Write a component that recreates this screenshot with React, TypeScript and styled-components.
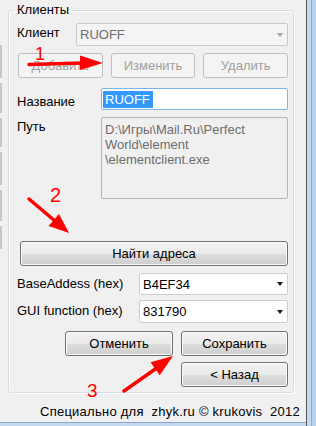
import React from 'react';
import styled, { createGlobalStyle } from 'styled-components';

const GlobalStyle = createGlobalStyle`
    html, body {
        margin: 0;
        padding: 0;
        background: #f0f0f0;
    }
    body {
        font-family: "Liberation Sans", Arial, sans-serif;
        font-size: 13px;
        color: #000;
    }
`

const Screen = styled.div`
    position: relative;
    width: 316px;
    height: 426px;
    overflow: hidden;
    display: flex;
    background: #f0f0f0;
`

const Main = styled.div`
    width: 306px;
    display: flex;
    flex-direction: column;
`

const Body = styled.div`
    flex: 1;
    display: flex;
`

const EdgeStrip = styled.div`
    width: 3px;
    display: flex;
    flex-direction: column;
    gap: 5px;
    padding-top: 45px;
`

const EdgeTick = styled.div<{ $h: number }>`
    width: 2px;
    height: ${p => p.$h}px;
    background: #c8c8c8;
`

const Panel = styled.div`
    width: 303px;
    display: flex;
    flex-direction: column;
`

const Group = styled.fieldset`
    box-sizing: border-box;
    width: 286px;
    min-width: 0;
    margin: 2px 0 0 5px;
    padding: 5px 5px 5px 8px;
    border: 1px solid #d5dfe5;
    border-radius: 3px;
    box-shadow: inset 1px 1px 0 #fff, 1px 1px 0 #fff;
    display: flex;
    flex-direction: column;
`

const Legend = styled.legend`
    padding: 0 3px;
    margin-left: -3px;
    line-height: 16px;
    font-size: 13px;
`

const Row = styled.div<{ $mt?: number; $h: number }>`
    display: flex;
    align-items: flex-start;
    margin-top: ${p => p.$mt || 0}px;
    height: ${p => p.$h}px;
`

const Label = styled.span<{ $w: number; $pt: number }>`
    width: ${p => p.$w}px;
    flex: none;
    padding-top: ${p => p.$pt}px;
    line-height: 15px;
    white-space: nowrap;
`

const Combo = styled.div<{ $disabled?: boolean }>`
    box-sizing: border-box;
    flex: 1;
    height: 100%;
    display: flex;
    align-items: center;
    justify-content: space-between;
    padding: 0 4px 0 3px;
    border: 1px solid ${p => p.$disabled ? '#c9c9c9' : '#cdcdcd'};
    border-radius: 2px;
    background: ${p => p.$disabled ? '#f4f4f4' : '#fff'};
    color: ${p => p.$disabled ? '#6d6d6d' : '#000'};
`

const Caret = styled.span<{ $disabled?: boolean }>`
    width: 0;
    height: 0;
    border-left: 3.5px solid transparent;
    border-right: 3.5px solid transparent;
    border-top: 4px solid ${p => p.$disabled ? '#a3a3a3' : '#1a1a1a'};
`

const TextInput = styled.div`
    box-sizing: border-box;
    flex: 1;
    height: 100%;
    display: flex;
    align-items: center;
    padding-left: 1px;
    border: 1px solid #7eb4ea;
    border-radius: 2px;
    background: #fff;
`

const Selected = styled.span`
    padding: 0 3px 0 2px;
    line-height: 17px;
    background: #3399ff;
    color: #fff;
`

const PathBox = styled.div`
    box-sizing: border-box;
    flex: 1;
    height: 100%;
    padding: 4px 3px 0;
    border: 1px solid #b5b5b5;
    border-radius: 2px;
    background: #f0f0f0;
    color: #6d6d6d;
    line-height: 15px;
    white-space: pre-line;
`

const ButtonGrid = styled.div`
    display: grid;
    grid-template-columns: repeat(3, 1fr);
    gap: 8px;
    margin: 7px 0 0 1px;
    height: 25px;
`

const ButtonRow = styled.div<{ $mt: number }>`
    display: flex;
    justify-content: flex-end;
    gap: 8px;
    margin-top: ${p => p.$mt}px;
    height: 25px;
`

const Button = styled.button<{ $w?: number }>`
    box-sizing: border-box;
    width: ${p => p.$w ? `${p.$w}px` : '100%'};
    height: 100%;
    padding: 0;
    font-family: "Liberation Sans", Arial, sans-serif;
    font-size: 13px;
    color: #000;
    border: 1px solid #707070;
    border-radius: 3px;
    background: linear-gradient(#f2f2f2 0%, #ebebeb 50%, #dddddd 51%, #cfcfcf 100%);
    box-shadow: inset 0 0 0 1px #fbfbfb;

    &:disabled {
        color: #a0a0a0;
        border-color: #bfbfbf;
        background: #f4f4f4;
        box-shadow: none;
    }
`

const WideButton = styled(Button)`
    margin: 42px 0 0 3px;
    width: 268px;
    height: 25px;
`

const Footer = styled.div`
    margin-top: 11px;
    padding-left: 37px;
    line-height: 15px;
    letter-spacing: 0.25px;
    white-space: pre;
`

const BottomStrip = styled.div`
    margin-top: auto;
    height: 3px;
    border-top: 1px solid #8ba7c6;
    background: #c4daf1;
`

const WindowFrame = styled.div`
    width: 10px;
    box-sizing: border-box;
    border-left: 1px solid #5a5a5a;
    background: linear-gradient(to right, #c3d9f1 0 4px, #8eadd0 4px 5px, #b8d2ee 5px);
`

const Annotations = styled.svg`
    position: absolute;
    left: 0;
    top: 0;
    width: 316px;
    height: 426px;
    pointer-events: none;
`

const Digit = styled.text`
    font-family: "Liberation Sans", Arial, sans-serif;
    fill: #ff0000;
`

const ticks = [33, 30, 29, 33, 31, 23]

export default function App() {
    return (
        <Screen>
            <GlobalStyle />
            <Main>
                <Body>
                    <EdgeStrip>
                        {ticks.map((h, i) => <EdgeTick key={i} $h={h} />)}
                    </EdgeStrip>
                    <Panel>
                        <Group>
                            <Legend>Клиенты</Legend>
                            <Row $h={23}>
                                <Label $w={59} $pt={2}>Клиент</Label>
                                <Combo $disabled>
                                    <span>RUOFF</span>
                                    <Caret $disabled />
                                </Combo>
                            </Row>
                            <ButtonGrid>
                                <Button disabled>Добавить</Button>
                                <Button disabled>Изменить</Button>
                                <Button disabled>Удалить</Button>
                            </ButtonGrid>
                            <Row $mt={10} $h={22}>
                                <Label $w={84} $pt={6}>Название</Label>
                                <TextInput>
                                    <Selected>RUOFF</Selected>
                                </TextInput>
                            </Row>
                            <Row $mt={7} $h={82}>
                                <Label $w={84} $pt={2}>Путь</Label>
                                <PathBox>{'D:\\Игры\\Mail.Ru\\Perfect\nWorld\\element\n\\elementclient.exe'}</PathBox>
                            </Row>
                            <WideButton>Найти адреса</WideButton>
                            <Row $mt={7} $h={22}>
                                <Label $w={122} $pt={3}>BaseAddess (hex)</Label>
                                <Combo>
                                    <span>B4EF34</span>
                                    <Caret />
                                </Combo>
                            </Row>
                            <Row $mt={5} $h={23}>
                                <Label $w={122} $pt={3}>GUI function (hex)</Label>
                                <Combo>
                                    <span>831790</span>
                                    <Caret />
                                </Combo>
                            </Row>
                            <ButtonRow $mt={8}>
                                <Button $w={108}>Отменить</Button>
                                <Button $w={107}>Сохранить</Button>
                            </ButtonRow>
                            <ButtonRow $mt={6}>
                                <Button $w={107}>&lt; Назад</Button>
                            </ButtonRow>
                        </Group>
                        <Footer>{'Специально для  zhyk.ru © krukovis  2012'}</Footer>
                    </Panel>
                </Body>
                <BottomStrip />
            </Main>
            <WindowFrame />

            <Annotations viewBox="0 0 316 426">
                <g stroke="#ff0000" strokeWidth="3.5" strokeLinecap="round">
                    <line x1="29" y1="64.5" x2="82" y2="63" />
                    <line x1="29" y1="199" x2="55" y2="221" />
                    <line x1="124" y1="391" x2="156" y2="368.5" />
                </g>
                <g fill="#ff0000">
                    <polygon points="80,55.5 103,63 80,70" />
                    <polygon points="48.6,226.1 69,233 59,213.9" />
                    <polygon points="159.8,375.3 173,356 150.5,362.3" />
                </g>
                <Digit x="35" y="60" fontSize="18">1</Digit>
                <Digit x="50" y="202" fontSize="20">2</Digit>
                <Digit x="87" y="397" fontSize="19">3</Digit>
            </Annotations>
        </Screen>
    );
}
